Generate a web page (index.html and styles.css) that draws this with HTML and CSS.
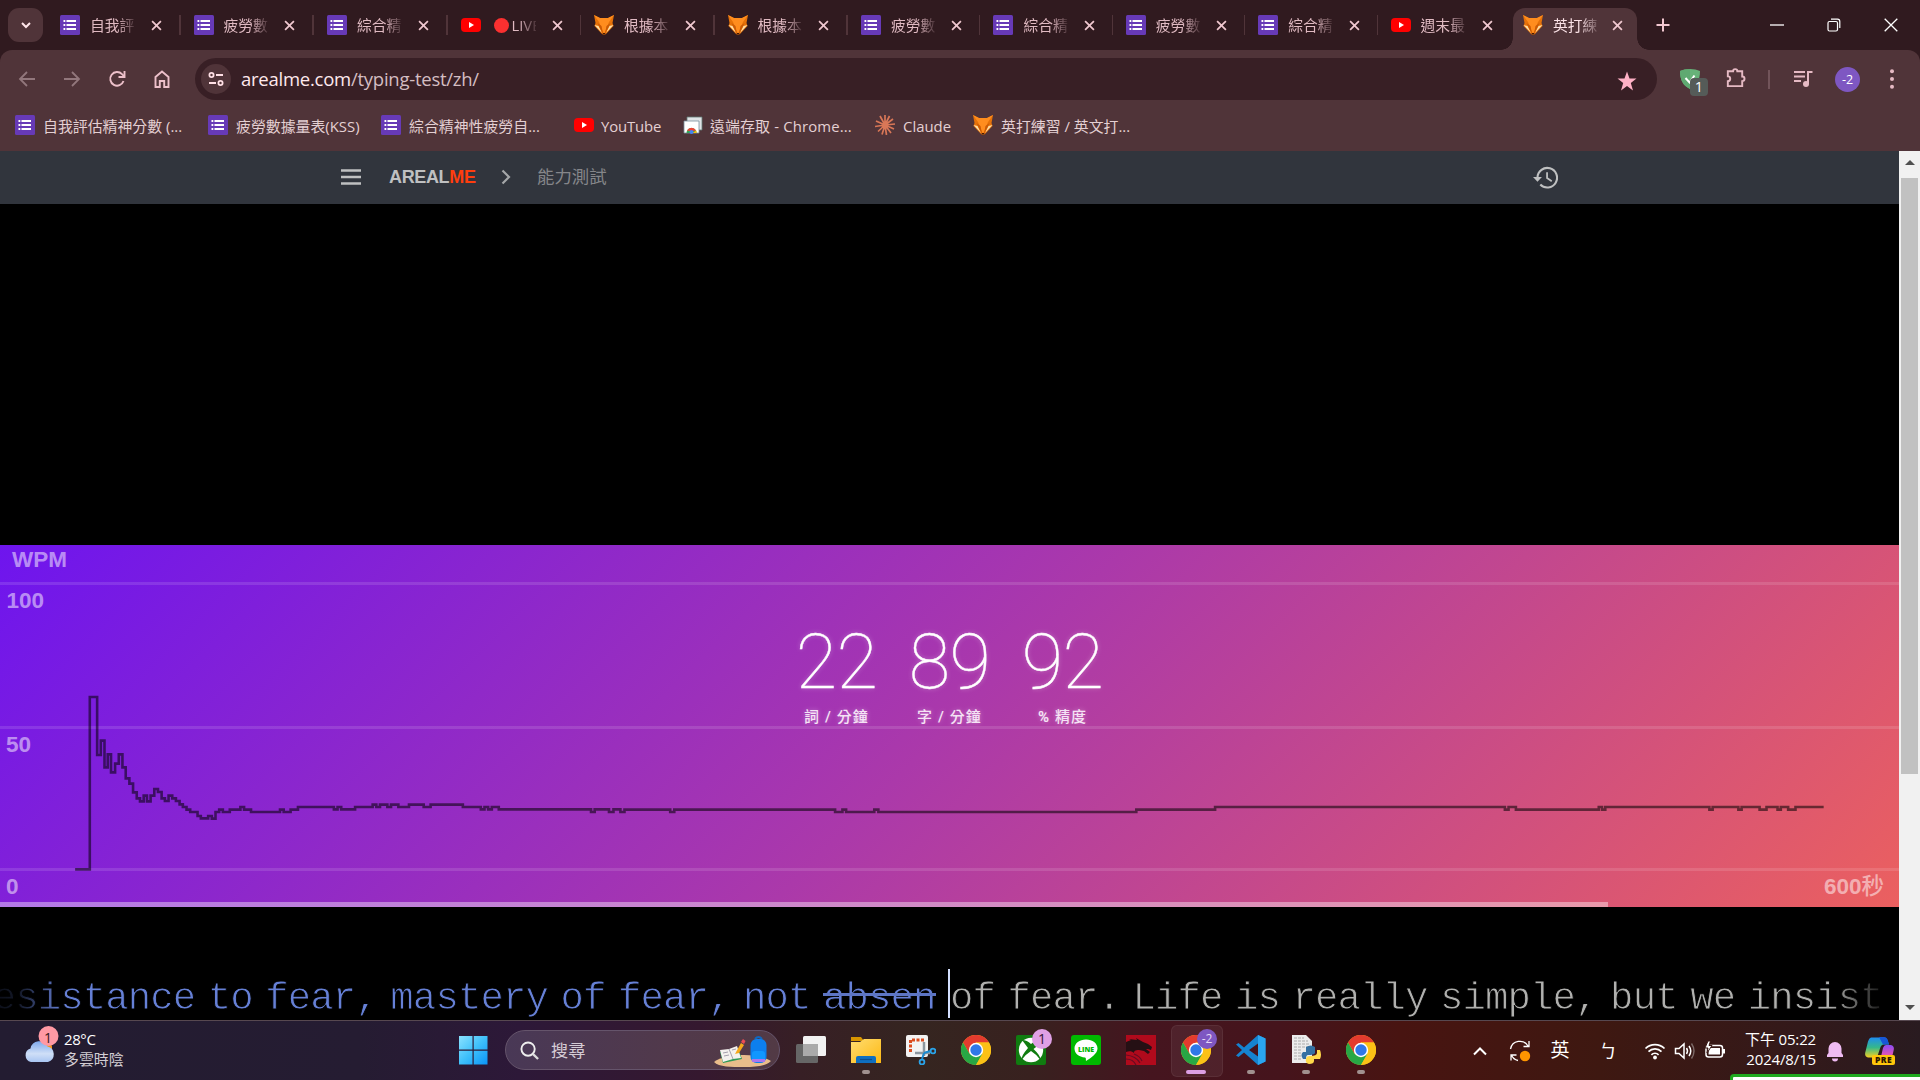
FILE: index.html
```html
<!DOCTYPE html>
<html lang="zh-Hant">
<head>
<meta charset="utf-8">
<title>英打練習</title>
<link rel="stylesheet" href="styles.css">
</head>
<body>
<svg class="sprite" width="0" height="0" aria-hidden="true">
  <defs>
    <linearGradient id="win" x1="0" y1="0" x2="1" y2="1"><stop offset="0" stop-color="#8be2ff"/><stop offset=".5" stop-color="#3fc0fa"/><stop offset="1" stop-color="#0a94f7"/></linearGradient>
    <linearGradient id="cloud" x1="0" y1="0" x2="0" y2="1"><stop offset="0" stop-color="#7fa9ec"/><stop offset=".6" stop-color="#cfdff7"/><stop offset="1" stop-color="#a9c5f2"/></linearGradient>
    <linearGradient id="folder" x1="0" y1="0" x2="1" y2="1"><stop offset="0" stop-color="#ffdc70"/><stop offset="1" stop-color="#fdb913"/></linearGradient>
    <linearGradient id="cop1" x1="0" y1="0" x2="0" y2="1"><stop offset="0" stop-color="#1e8df0"/><stop offset=".5" stop-color="#35b88a"/><stop offset="1" stop-color="#f5d020"/></linearGradient>
    <linearGradient id="cop2" x1="0" y1="0" x2="0" y2="1"><stop offset="0" stop-color="#8a4cf5"/><stop offset=".5" stop-color="#e254b5"/><stop offset="1" stop-color="#ff8a3c"/></linearGradient>
    <symbol id="form" viewBox="0 0 20 20"><rect width="20" height="20" rx="1.5" fill="#673ab7"/><path d="M6.5 6H16M6.5 10H16M6.5 14H16" stroke="#fff" stroke-width="2.2"/><path d="M3.5 6h1.8M3.5 10h1.8M3.5 14h1.8" stroke="#fff" stroke-width="2"/></symbol>
    <symbol id="yt" viewBox="0 0 20 20"><rect y="3" width="20" height="14" rx="4" fill="#f00"/><path d="M8 7v6l5-3z" fill="#fff"/></symbol>
    <symbol id="fox" viewBox="0 0 20 20"><path d="M0 0l6 3h8l6-3-1.500 8 1 3-7.500 8-2 1-2-1-7.500-8 1-3z" fill="#e67209"/><path d="M0 0l6 3h8l6-3-5 7-5 12L5 7z" fill="#ff8d1e"/><path d="M.5 10l4 1 3.500 7zM19.500 10l-4 1-3.500 7z" fill="#ffdfa6"/><path d="M3.500 8l4 3 1.500 8zM16.500 8l-4 3-1.500 8z" fill="#c95a05"/><path d="M8.500 18h3L10 20z" fill="#3a1608"/></symbol>
    <symbol id="x" viewBox="0 0 12 12"><path d="M1.2 1.2l9.6 9.6M10.8 1.2L1.2 10.8" stroke="currentColor" stroke-width="1.9"/></symbol>
    <symbol id="chrome" viewBox="0 0 30 30"><circle cx="15" cy="15" r="15" fill="#fbc116"/><path d="M2 7.5A15 15 0 0 1 28 7.5H15L8.5 18.7z" fill="#e33b2e"/><path d="M2 7.5A15 15 0 0 0 15 30l6.5-11.3-13 0z" fill="#28a745"/><path d="M28 7.5A15 15 0 0 1 15 30l6.5-11.3L15 7.5z" fill="#fbc116"/><circle cx="15" cy="15" r="7.2" fill="#fff"/><circle cx="15" cy="15" r="5.7" fill="#2f78e8"/></symbol>
  </defs>
</svg>

<header class="browser">
  <div class="tabstrip">
    <button class="tabsearch"><svg viewBox="0 0 12 12" width="12" height="12"><path d="M2 4l4 4 4-4" fill="none" stroke="currentColor" stroke-width="2"/></svg></button>
    <div class="tabs">
      <div class="tab"><svg class="fav"><use href="#form"/></svg><span>自我評</span><svg class="close"><use href="#x"/></svg></div>
      <div class="tab"><svg class="fav"><use href="#form"/></svg><span>疲勞數</span><svg class="close"><use href="#x"/></svg></div>
      <div class="tab"><svg class="fav"><use href="#form"/></svg><span>綜合精</span><svg class="close"><use href="#x"/></svg></div>
      <div class="tab"><svg class="fav"><use href="#yt"/></svg><span><i class="live-dot"></i>LIVE</span><svg class="close"><use href="#x"/></svg></div>
      <div class="tab"><svg class="fav"><use href="#fox"/></svg><span>根據本</span><svg class="close"><use href="#x"/></svg></div>
      <div class="tab"><svg class="fav"><use href="#fox"/></svg><span>根據本</span><svg class="close"><use href="#x"/></svg></div>
      <div class="tab"><svg class="fav"><use href="#form"/></svg><span>疲勞數</span><svg class="close"><use href="#x"/></svg></div>
      <div class="tab"><svg class="fav"><use href="#form"/></svg><span>綜合精</span><svg class="close"><use href="#x"/></svg></div>
      <div class="tab"><svg class="fav"><use href="#form"/></svg><span>疲勞數</span><svg class="close"><use href="#x"/></svg></div>
      <div class="tab"><svg class="fav"><use href="#form"/></svg><span>綜合精</span><svg class="close"><use href="#x"/></svg></div>
      <div class="tab before-active"><svg class="fav"><use href="#yt"/></svg><span>週末最</span><svg class="close"><use href="#x"/></svg></div>
      <div class="tab active"><svg class="fav"><use href="#fox"/></svg><span>英打練</span><svg class="close"><use href="#x"/></svg></div>
    </div>
    <svg class="newtab" viewBox="0 0 14 14" width="14" height="14"><path d="M7 .5v13M.5 7h13" stroke="currentColor" stroke-width="2"/></svg>
    <div class="wincontrols">
      <svg viewBox="0 0 14 14"><path d="M0 7h14" stroke="#fff" stroke-width="1.3"/></svg>
      <svg viewBox="0 0 14 14"><rect x="1" y="3.5" width="9.5" height="9.5" rx="1.5" fill="none" stroke="#fff" stroke-width="1.2"/><path d="M4 1.2h6.5a2.3 2.3 0 0 1 2.3 2.3V10" fill="none" stroke="#fff" stroke-width="1.2"/></svg>
      <svg viewBox="0 0 14 14"><path d="M.7.7l12.6 12.6M13.3.7L.7 13.3" stroke="#fff" stroke-width="1.3"/></svg>
    </div>
  </div>

  <div class="toolbar">
    <div class="nav">
      <svg class="dim" viewBox="0 0 20 20"><path d="M18 10H3M10 3l-7 7 7 7" fill="none" stroke="currentColor" stroke-width="1.8"/></svg>
      <svg class="dim" viewBox="0 0 20 20"><path d="M2 10h15M10 3l7 7-7 7" fill="none" stroke="currentColor" stroke-width="1.8"/></svg>
      <svg viewBox="0 0 20 20"><path d="M16.5 12A6.8 6.8 0 1 1 15 5.200l2 2" fill="none" stroke="currentColor" stroke-width="1.9"/><path d="M17.500 2v6h-6" fill="none" stroke="currentColor" stroke-width="1.9"/></svg>
      <svg viewBox="0 0 20 20"><path d="M3.500 18V8L10 2.500 16.500 8v10h-4.300v-6H7.800v6z" fill="none" stroke="currentColor" stroke-width="1.9"/></svg>
    </div>
    <div class="omnibox">
      <span class="siteinfo"><svg viewBox="0 0 16 16" width="16" height="16" fill="none" stroke="currentColor" stroke-width="1.8"><circle cx="3.500" cy="4" r="2.100"/><path d="M8 4h7M1 12h7"/><circle cx="12.500" cy="12" r="2.100"/></svg></span>
      <span class="url"><b>arealme.com</b>/typing-test/zh/</span>
      <svg class="star" viewBox="0 0 20 20"><path d="M10 .5l2.500 7h7l-5.700 4.400L16 19.500l-6-4.600-6 4.600 2.200-7.600L.5 7.500h7z" fill="#ffb1c6"/></svg>
    </div>
    <div class="actions">
      <div class="ext"><svg viewBox="0 0 20 20" width="20" height="20"><path d="M10 0c4 0 7 .7 10 2 0 9-3 14.500-10 18C3 16.500 0 11 0 2 3 .7 6 0 10 0z" fill="#67b279"/><path d="M10 0v20C3 16.500 0 11 0 2 3 .7 6 0 10 0z" fill="#5fa971"/><path d="M5.500 9l4 4.500 5-7" fill="none" stroke="#fff" stroke-width="2"/></svg><span class="badge">1</span></div>
      <svg class="puzzle" viewBox="0 0 24 24"><path d="M4 5.500h5.500a2.200 2.200 0 0 1 4.400 0H19v5.500a2.400 2.400 0 0 1 0 4.800V21H4v-5.200a2.500 2.500 0 0 0 0-5z" fill="none" stroke="currentColor" stroke-width="2"/></svg>
      <i class="divider"></i>
      <svg class="playlist" viewBox="0 0 20 20"><path d="M1 3h11M1 7.500h11M1 12h7" stroke="currentColor" stroke-width="2"/><path d="M15 15V3h4.500" fill="none" stroke="currentColor" stroke-width="2"/><circle cx="13" cy="15" r="3" fill="currentColor"/></svg>
      <span class="avatar">-2</span>
      <svg class="dots" viewBox="0 0 6 20"><g fill="currentColor"><circle cx="3" cy="2.200" r="2"/><circle cx="3" cy="10" r="2"/><circle cx="3" cy="17.800" r="2"/></g></svg>
    </div>
  </div>

  <nav class="bookmarks">
    <a class="bm bm1"><svg class="fav"><use href="#form"/></svg><span>自我評估精神分數 (...</span></a>
    <a class="bm bm2"><svg class="fav"><use href="#form"/></svg><span>疲勞數據量表(KSS)</span></a>
    <a class="bm bm3"><svg class="fav"><use href="#form"/></svg><span>綜合精神性疲勞自...</span></a>
    <a class="bm bm4"><svg class="fav"><use href="#yt"/></svg><span>YouTube</span></a>
    <a class="bm bm5"><svg class="fav" viewBox="0 0 20 20"><path d="M4 2h15v13H4z" fill="#dfe3e6" stroke="#5f7a74" stroke-width=".8"/><path d="M1 6h15v12H1z" fill="#fff" stroke="#78909c" stroke-width=".8"/><path d="M3.500 18a5 5 0 0 1 10 0z" fill="#34a853"/><path d="M4 15.500a5 5 0 0 1 9 0l-4.500 1z" fill="#ea4335"/><path d="M9 18h4.500v-2.500z" fill="#fbbc05"/><circle cx="8.500" cy="17" r="2" fill="#4285f4"/></svg><span>遠端存取 - Chrome...</span></a>
    <a class="bm bm6"><svg class="fav" viewBox="0 0 20 20"><path d="M10 10V0M10 10l4.500-9M10 10l8-6M10 10l10-1M10 10l9 4M10 10l6 8M10 10l1.500 10M10 10L7 19.500M10 10l-7 6.500M10 10L0 11.500M10 10L1 6M10 10L5 1" stroke="#d97757" stroke-width="1.700"/></svg><span>Claude</span></a>
    <a class="bm bm7"><svg class="fav"><use href="#fox"/></svg><span>英打練習 / 英文打...</span></a>
  </nav>
</header>

<div class="viewport">
  <main class="page">
    <div class="sitebar">
      <svg class="menu" viewBox="0 0 20 16"><path d="M0 1.500h20M0 8h20M0 14.500h20" stroke="currentColor" stroke-width="2.400"/></svg>
      <span class="brand">AREAL<em>ME</em></span>
      <svg class="crumb" viewBox="0 0 10 16"><path d="M1.500 1.500L8 8l-6.500 6.500" fill="none" stroke="currentColor" stroke-width="2.200"/></svg>
      <span class="section">能力測試</span>
      <svg class="history" viewBox="0 0 24 22"><path d="M4.300 11A9.400 9.400 0 1 1 7 17.800" fill="none" stroke="currentColor" stroke-width="2"/><path d="M0 10.500h8.600L4.300 15z" fill="currentColor"/><path d="M13.500 6v5.500l4.500 3" fill="none" stroke="currentColor" stroke-width="1.700"/></svg>
    </div>
    <div class="adspace"></div>
    <section class="chart">
      <svg class="plot" viewBox="0 0 1899 362" width="1899" height="362">
        <g stroke="#fff" stroke-opacity=".12" stroke-width="3"><path d="M0 38.500H1899M0 182.500H1899M0 324.500H1899"/></g>
        <g fill="#fff" fill-opacity=".52" class="axis">
          <text x="12" y="22">WPM</text><text x="6.500" y="63">100</text><text x="6" y="206.500">50</text><text x="6" y="349">0</text><text x="1884" y="349" text-anchor="end">600<tspan class="unit">秒</tspan></text>
        </g>
        <g transform="translate(0 -5) scale(.40816 .33333)"><path vector-effect="non-scaling-stroke" fill="none" stroke="#000" stroke-opacity=".54" stroke-width="2.600" d="M184 988H220V471H238V645H247V602H256V682H264V643H272V697H282V671H291V643H300V682H308V715H317V731H326V757H335V775H343V784H352V767H360V784H369V767H378V747H387V756H396V775H404V783H413V767H422V775H431V783H440V793H448V801H457V809H466V816H484V828H492V835H510V828H519V836H528V816H537V809H546V816H563V809H589V801H598V809H615V816H686V809H695V816H712V809H730V801H818V808H827V801H836V808H870V801H913V794H922V801H931V794H949V801H958V794H976V801H1002V794H1038V801H1055V794H1134V801H1178V808H1187V801H1196V808H1205V801H1222V808H1448V816H1457V808H1492V816H1503V808H1520V816H1530V809H1642V816H1652V809H2046V816H2064V809H2073V816H2142V809H2152V816H2784V809H2977V801H3687V809H3696V801H3714V809H3917V801H3925V809H3933V801H4188V809H4196V801H4259V809H4267V801H4311V809H4328V801H4355V809H4363V801H4381V809H4399V801H4468"/></g>
      </svg>
      <div class="stats">
        <div class="stat"><strong>22</strong><small>詞 / 分鐘</small></div>
        <div class="stat"><strong>89</strong><small>字 / 分鐘</small></div>
        <div class="stat"><strong>92</strong><small><b>%</b> 精度</small></div>
      </div>
      <div class="progress" style="width:84.67%"></div>
    </section>
    <section class="typing">
      <div class="typed"><span>esistance to fear, mastery of fear, not <del>absen</del>&nbsp;</span></div>
      <i class="caret"></i>
      <div class="upcoming">of fear. Life is really simple, but we insist</div>
    </section>
  </main>
  <aside class="scrollbar"><i class="up"></i><i class="thumb"></i><i class="down"></i></aside>
</div>

<footer class="taskbar">
  <div class="weather">
    <svg viewBox="0 0 36 38" width="36" height="38"><rect x="20" y="19" width="8" height="8" rx="3" fill="#f7941d"/><path d="M7 37a7 7 0 0 1-.5-13.500 9 9 0 0 1 17-2A8 8 0 0 1 24 37z" fill="url(#cloud)"/><circle cx="24.500" cy="11" r="10" fill="#ff99a4"/></svg><span class="count">1</span>
    <div class="wtext"><span>28°C</span><span>多雲時陰</span></div>
  </div>
  <div class="dock">
    <svg class="app" viewBox="0 0 30 30"><path d="M1 1h13.500v13.500H1zM15.700 1H29.500v13.500H15.700zM1 15.700h13.500V29.500H1zM15.700 15.700H29.500V29.500H15.700z" fill="url(#win)"/></svg>
    <div class="search">
      <svg viewBox="0 0 20 20" width="19" height="19"><circle cx="8.500" cy="8.500" r="7" fill="none" stroke="#eee" stroke-width="2"/><path d="M13.500 13.500l5.500 5.500" stroke="#ddd" stroke-width="2.400"/></svg>
      <span>搜尋</span>
      <svg class="art" viewBox="0 0 58 32" width="58" height="32"><path d="M0 26C12 17 46 17 57 25c-5 5-14 6-27 6S5 31 0 26z" fill="#e9bd8b"/><path d="M6 16l18-4 4 11-19 4z" fill="#2e9b57"/><path d="M6 14l9-1 8-3 4 12-8 1-10 3z" fill="#f4f1ee"/><path d="M15 13l4 10M9 17l5-1M10 20l5-1M18 14l4-1" stroke="#a5a0ad" stroke-width="1"/><path d="M21 18l6-11 3 2-5 8z" fill="#f6a81c"/><path d="M27 6l2-3 2.500 2-1.500 3z" fill="#ee4b55"/><path d="M41 3q3.500-4 7 0" stroke="#1167bd" stroke-width="2" fill="none"/><rect x="36.500" y="3" width="16" height="24" rx="6" fill="#0d7fee"/><rect x="38" y="15" width="13" height="10" rx="3" fill="#1197ff"/><path d="M38 23h13v3H38z" fill="#a976ef"/></svg>
    </div>
    <svg class="app" viewBox="0 0 30 30"><rect x="0" y="9" width="22" height="19" rx="1.500" fill="#666"/><rect x="7" y="1" width="23" height="20" rx="1.500" fill="#f2f2f2"/><path d="M7 9h15v12H8.500A1.500 1.500 0 0 1 7 19.500z" fill="#aaa"/></svg>
    <span class="slot run"><svg class="app" viewBox="0 0 30 30"><path d="M0 2h10l3 4H0z" fill="#d79500"/><path d="M0 7h9l4-3h17v24H0z" fill="url(#folder)"/><path d="M5 28v-5a2 2 0 0 1 2-2h16a2 2 0 0 1 2 2v5z" fill="#0f6fc0"/><path d="M9 24.500h12" stroke="#0a4d8f" stroke-width="1.200"/></svg></span>
    <svg class="app" viewBox="0 0 30 30"><rect width="22" height="22" rx="2" fill="#f3f3f3"/><path d="M4.500 17V5H18" fill="none" stroke="#dc4c1e" stroke-width="3" stroke-dasharray="3 1.500"/><path d="M18 7v14M9 18h15" stroke="#8d979f" stroke-width="2.500"/><path d="M18 18l-2 6M18 18l6-2" stroke="#1b8bd0" stroke-width="2"/><circle cx="16" cy="27" r="2.400" fill="none" stroke="#2aa3e8" stroke-width="1.800"/><circle cx="27" cy="16" r="2.400" fill="none" stroke="#2aa3e8" stroke-width="1.800"/></svg>
    <svg class="app"><use href="#chrome"/></svg>
    <span class="slot"><svg class="app" viewBox="0 0 30 30"><rect width="30" height="30" rx="2" fill="#107c10"/><circle cx="15" cy="15" r="12.200" fill="#fff"/><path d="M6 5q5 0 9 4 4-4 9 0l-6.500 5Q25 21 24.500 25 20 19 15 16 10 19 5.500 25 5 21 12 13z" fill="#107c10"/></svg><b class="pill pink">1</b></span>
    <svg class="app" viewBox="0 0 30 30"><rect width="30" height="30" rx="3" fill="#00b900"/><path d="M15 4.500c6.500 0 11.500 3.800 11.500 9 0 5-6.500 9.500-11.500 12.500-.5-1 .5-3-1-3.500C8 22 3.500 18.500 3.500 13.500c0-5.200 5-9 11.500-9z" fill="#fff"/><text x="15" y="16.500" text-anchor="middle" class="linetext">LINE</text></svg>
    <svg class="app" viewBox="0 0 30 30"><rect width="30" height="30" fill="#b00a1c"/><path d="M0 7l5-2-2-1 8 1-1-2 7 4 5 2 4 3-1 3-3-1h-2l4 3-2 2-4-3-5-1c-4 0-5 1-5 3-2-2-5-2-8-1z" fill="#251014"/><path d="M0 20q10 1 14 8M0 24q7 0 10 6M8 19q6 2 8 7" stroke="#660b22" stroke-width="1.200" fill="none"/></svg>
    <span class="slot current"><svg class="app"><use href="#chrome"/></svg><b class="pill violet">-2</b></span>
    <span class="slot run"><svg class="app" viewBox="0 0 30 30"><path d="M22 0l7.500 3.500v23L22 30 8 17.500 2.500 22 0 20.500 6 15 0 9.500 2.500 8 8 12.500zM22 8.500L13 15l9 6.500z" fill="#1583d0" fill-rule="evenodd"/><path d="M22 0l7.500 3.500v23L22 30z" fill="#2aa5f0"/></svg></span>
    <span class="slot run"><svg class="app" viewBox="0 0 30 30"><path d="M1 0h14l6 6v22H1z" fill="#ececec"/><path d="M3 3h10M3 6h14M3 9h15M3 12h15M3 15h8M3 18h8M3 21h8M3 24h8" stroke="#aaa" stroke-dasharray="3 1"/><path d="M15 17v-5q5-3 9 0v6q-1 2-7 2-2 0-2 4h-3q-3-4 0-7z" fill="#3470a2"/><path d="M26 15h3q2 5 0 9h-6v2q0 3-5 3-4-1-3-5 0-3 4-3 7 0 7-3z" fill="#ffd94a"/></svg></span>
    <span class="slot run"><svg class="app"><use href="#chrome"/></svg></span>
  </div>
  <div class="tray">
    <svg viewBox="0 0 40 24" class="w40"><path d="M14 15.500l6-6 6 6" fill="none" stroke="#fff" stroke-width="2"/></svg>
    <svg viewBox="0 0 40 24" class="w40"><g fill="none" stroke="#fff" stroke-width="1.300"><path d="M10.500 10a9.500 9.500 0 0 1 17.500-3M29 2v5.500h-5.500M18 21.500a9 9 0 0 1-6.500-5.500M11 21.500V16h5.500"/></g><circle cx="25" cy="17" r="5.200" fill="#ff9500"/></svg>
    <span class="ime">英</span><span class="ime zhuyin">ㄅ</span>
    <svg viewBox="0 0 30 24" class="w30"><g fill="none" stroke="#fff" stroke-width="1.700"><path d="M5.500 9.500a13.500 13.500 0 0 1 19 0M8.500 12.700a9 9 0 0 1 13 0M11.400 15.800a5 5 0 0 1 7.200 0"/></g><circle cx="15" cy="18.500" r="1.900" fill="#fff"/></svg>
    <svg viewBox="0 0 30 24" class="w30"><path d="M5.500 9.500h3.500l5-4.500v14l-5-4.500H5.500z" fill="none" stroke="#fff" stroke-width="1.500"/><path d="M16.500 9q2 3 0 6M19 7q3.500 5 0 10" fill="none" stroke="#fff" stroke-width="1.500"/><path d="M21.500 4.500q5 7.500 0 15" fill="none" stroke="#7d6a68" stroke-width="1.400"/></svg>
    <svg viewBox="0 0 30 24" class="w30"><rect x="6" y="6.500" width="16.500" height="11.500" rx="2.500" fill="none" stroke="#fff" stroke-width="1.500"/><path d="M9 9h11v6.500H8.500zM23 10h2v4.500h-2z" fill="#fff"/><path d="M8 2l-3 7h3l-1 5 5-7.500H9L10.500 2z" fill="#fff" stroke="#3a1915" stroke-width="1"/></svg>
    <div class="clock"><span>下午 05:22</span><span>2024/8/15</span></div>
    <svg viewBox="0 0 30 24" class="w30 bell"><path d="M7 18v-2l1.500-2V9.500a6.500 6.500 0 0 1 13 0V14l1.500 2v2z" fill="#efbbf3"/><path d="M12 19.500h6a3 3 0 0 1-6 0z" fill="#efbbf3"/></svg>
    <div class="copilot"><svg viewBox="0 0 30 30" width="30" height="30"><path d="M6 1.500h13q3 0 4 4l1 3h-5q-3 0-4 4l-2 6q-1 3-4 3H3q-4-1-2.500-6l2.500-10q1-3.500 3-4z" fill="url(#cop1)"/><path d="M14 1h5q3 0 4 4l1 3.500h-6z" fill="#1757d6"/><path d="M21 9h5q4 1 2.500 6L26 25q-1 4-5 4H12q2-1 3-4l3-13q1-3 3-3z" fill="url(#cop2)"/></svg><b>PRE</b></div>
  </div>
  <div class="toast"></div>
</footer>
</body>
</html>
```
FILE: styles.css
```css
* { box-sizing: border-box; }
html, body { margin: 0; height: 100%; }
body {
  width: 1920px; height: 1080px; overflow: hidden; display: flex; flex-direction: column;
  background: #000; font-family: "Open Sans", "Noto Sans CJK TC", sans-serif;
}
svg { display: block; flex: none; }
.sprite { position: absolute; }
i, em { font-style: normal; }

/* browser chrome */
.browser { flex: none; height: 151px; background: #301a1f; color: #e8c0c9; }
.tabstrip { height: 50px; display: flex; align-items: center; }
.tabsearch { margin: 0 0 0 8px; width: 35px; height: 34px; border: 0; border-radius: 11px; background: #503439; color: #ffe6ea; display: flex; align-items: center; justify-content: center; }
.tabs { display: flex; margin-left: 4px; height: 50px; align-items: flex-end; }
.tab { position: relative; flex: none; width: 132.400px; height: 42px; padding: 0 0 8px 13px; display: flex; align-items: center; font-size: 14.8px; color: #e0bac2; }
.tab:nth-child(-n+6) { width: 133.500px; }
.tab::after { content: ""; width: 2px; height: 20px; margin-left: 17px; background: #503439; }
.fav { width: 20px; height: 20px; flex: none; }
.tab span { width: 45px; margin-left: 10px; white-space: nowrap; line-height: 22px; -webkit-mask-image: linear-gradient(90deg, #000 60%, rgba(0,0,0,.15)); mask-image: linear-gradient(90deg, #000 60%, rgba(0,0,0,.15)); }
.live-dot { display: inline-block; width: 15px; height: 15px; border-radius: 50%; background: #fb3030; margin: 0 3px 0 3px; vertical-align: -2px; }
.close { width: 11px; height: 11px; margin-left: 16px; color: #f0c8d0; }
.before-active::after, .active::after { display: none; }
.tab.active { width: 123.500px; margin-left: 3.500px; padding-left: 9.500px; background: #503439; border-radius: 12px 12px 0 0; color: #fbe2e7; }
.tab.active .close { margin-left: 14.500px; }
.tab.active::before { content: ""; position: absolute; left: -12px; right: -12px; bottom: 0; height: 12px; background: radial-gradient(circle at 0 0, transparent 11.500px, #503439 12px) left / 12px 12px no-repeat, radial-gradient(circle at 100% 0, transparent 11.500px, #503439 12px) right / 12px 12px no-repeat; }
.newtab { margin-left: 19px; color: #f3c8d1; }
.wincontrols { margin-left: auto; margin-right: 22px; display: flex; gap: 43px; }
.wincontrols svg { width: 14px; height: 14px; }

.toolbar { height: 57px; padding-top: 8px; display: flex; background: #503439; border-radius: 12px 12px 0 0; }
.nav { width: 195px; height: 42px; padding-left: 17px; display: flex; align-items: center; gap: 25px; color: #edc0ca; }
.nav svg { width: 20px; height: 20px; }
.nav .dim { color: #92777c; }
.omnibox { width: 1462px; height: 42px; padding: 0 20px 0 6px; display: flex; align-items: center; border-radius: 21px; background: #381f25; }
.siteinfo { width: 30px; height: 30px; border-radius: 50%; background: #503439; color: #ffdfe5; display: flex; align-items: center; justify-content: center; }
.url { margin-left: 10px; font-size: 18.500px; letter-spacing: -.25px; color: #d4bdc2; line-height: 24px; }
.url b { font-weight: 400; color: #ffe9ed; }
.star { width: 20px; height: 20px; margin-left: auto; margin-top: 4px; }
.actions { display: flex; align-items: center; height: 42px; padding-left: 23px; color: #e6bac4; }
.ext { position: relative; }
.badge { position: absolute; left: 10px; top: 9px; width: 18px; height: 18px; border-radius: 4px; background: #555b58; color: #fff; font-size: 14.500px; line-height: 18px; text-align: center; }
.puzzle { width: 23px; height: 25px; margin-left: 24px; margin-bottom: 4px; }
.divider { width: 2px; height: 19px; margin-left: 21px; background: #72545a; }
.playlist { width: 20px; height: 20px; margin-left: 23px; }
.avatar { width: 25px; height: 25px; margin-left: 22px; border-radius: 50%; background: #7e57c2; color: #fff; font-size: 12.500px; line-height: 25px; text-align: center; }
.dots { width: 6px; height: 20px; margin-left: 29px; }

.bookmarks { height: 44px; padding: 8px 0 0 15px; display: flex; background: #503439; color: #e4d0d3; font-size: 14.900px; }
.bm { display: flex; align-items: center; gap: 8px; height: 20px; white-space: nowrap; }
.bm span { padding-top: 1px; }
.bm1 { width: 193px; } .bm2 { width: 173px; } .bm3 { width: 193px; } .bm4 { width: 109px; gap: 7px; letter-spacing: -.15px; } .bm5 { width: 192px; gap: 7px; letter-spacing: .15px; } .bm6 { width: 98px; }

/* page */
.viewport { flex: none; height: 869px; display: flex; }
.page { width: 1899px; display: flex; flex-direction: column; overflow: hidden; }
.sitebar { height: 53px; padding: 0 341px 1px; display: flex; align-items: center; background: #31353d; color: #bfc0c1; }
.menu { width: 20px; height: 16px; }
.brand { margin-left: 28px; width: 112px; font: 700 18px/20px "Liberation Sans", sans-serif; letter-spacing: -.35px; }
.brand em { color: #ff3d0d; }
.crumb { width: 10px; height: 16px; color: #a5a7a9; }
.section { margin-left: 26px; font-size: 17.400px; color: #85868a; line-height: 24px; padding-bottom: 2px; }
.history { width: 25px; height: 23px; margin-left: auto; }
.adspace { height: 341px; }
.chart { position: relative; height: 362px; background: linear-gradient(135deg, #6e15ee, #ab39aa 50%, #eb605f); }
.plot { position: absolute; inset: 0; }
.axis { font: 700 22.500px "Liberation Sans", "Noto Sans CJK TC", sans-serif; }
.unit { font-weight: 500; }
.stats { position: relative; display: flex; justify-content: center; padding-top: 79px; color: #fff; text-shadow: 0 0 5px rgba(255,255,255,.35); }
.stat { width: 113px; display: flex; flex-direction: column; align-items: center; }
.stat strong { font: 100 75.500px/76px Roboto, sans-serif; letter-spacing: -.5px; -webkit-text-stroke: .4px #fff; }
.stat small { margin-top: 6px; font: 500 15px/22px Roboto, "Noto Sans CJK TC", sans-serif; letter-spacing: 1.100px; color: #f5e3f5; white-space: nowrap; }
.progress { position: absolute; left: 0; bottom: 0; height: 5px; background: rgba(255,255,255,.4); }
.typing { height: 113px; padding-top: 62px; display: flex; font: 39px/50px "Liberation Mono", monospace; letter-spacing: -.9px; word-spacing: -10px; white-space: nowrap; -webkit-text-stroke: .9px #000; -webkit-mask-image: linear-gradient(90deg, rgba(0,0,0,.12), rgba(0,0,0,.2) 20px, #000 62px, #000 1830px, transparent 1890px); mask-image: linear-gradient(90deg, rgba(0,0,0,.12), rgba(0,0,0,.2) 20px, #000 62px, #000 1830px, transparent 1890px); }
.typed, .upcoming { padding-top: 5px; }
.typed { width: 948px; display: flex; justify-content: flex-end; color: #6680d6; }
.typed del { position: relative; text-decoration: none; }
.typed del::after { content: ""; position: absolute; left: 0; right: -1px; top: 16px; height: 3px; background: #5d75c4; }
.caret { width: 2px; height: 49px; background: #d4e0ff; }
.upcoming { width: 949px; color: #b0b0ae; }
.scrollbar { width: 21px; background: #f1f1f1; display: flex; flex-direction: column; align-items: center; }
.up, .down { border: 5px solid transparent; border-top: 0; border-bottom: 5px solid #505050; margin-top: 9px; }
.down { margin: auto 0 10px; border-top: 5px solid #505050; border-bottom: 0; }
.thumb { width: 17px; height: 596px; margin-top: 13px; background: #c1c1c1; }

/* taskbar */
.taskbar { position: relative; flex: none; height: 60px; display: grid; grid-template-columns: 458px 1002px 460px; align-items: center; border-top: 1px solid #574850; color: #fff; background: linear-gradient(90deg, #231c31 0, #251c32 360px, #2d1838 520px, #35182f 700px, #371f25 800px, #352520 920px, #38211f 1030px, #45151f 1150px, #45141c 1280px, #481411 1400px, #3e1811 1600px, #33191a 1800px, #291b20 1920px); }
.weather { position: relative; display: flex; padding-left: 24px; align-items: center; font-size: 15px; height: 59px; }
.weather > svg { margin-top: -13px; }
.count { position: absolute; left: 44px; top: 7px; color: #33181c; font-size: 14px; line-height: 20px; }
.wtext { margin-left: 4px; display: flex; flex-direction: column; line-height: 20px; margin-top: -4px; }
.wtext span:first-child { letter-spacing: -.4px; }
.wtext span + span { font-size: 14.900px; color: #d2cdd3; }
.dock { display: flex; align-items: center; gap: 25px; height: 59px; padding-bottom: 1px; }
.app { width: 30px; height: 30px; }
.search { width: 275px; height: 40px; margin: 0 -9px 0 -8px; padding: 0 7px 0 14px; border: 1px solid #65546b; border-radius: 20px; background: linear-gradient(90deg, #493856, #51394b 60%, #523a45); display: flex; align-items: center; color: #d4cbd4; font-size: 17.200px; }
.search span { margin-left: 12px; padding-bottom: 1px; }
.art { margin: 4px 0 0 auto; }
.slot { position: relative; height: 59px; display: flex; align-items: center; }
.slot svg { position: relative; }
.run::after { content: ""; position: absolute; left: 11px; top: 49px; width: 8px; height: 4px; border-radius: 2px; background: #a1918f; }
.current::before { content: ""; position: absolute; left: -10px; top: 4px; width: 50px; height: 50px; border-radius: 6px; background: rgba(255,255,255,.06); border: 1px solid rgba(255,255,255,.06); }
.current::after { content: ""; position: absolute; left: 5px; top: 49px; width: 20px; height: 4px; border-radius: 2px; background: #dc9fe4; }
.pill { position: absolute; left: 16px; top: 8px; width: 20px; height: 20px; border-radius: 50%; font-weight: 400; font-size: 14px; line-height: 20px; text-align: center; }
.pink { background: #dfa0e6; color: #351738; }
.violet { background: #7e57c2; color: #e5d9f5; font-size: 12px; }
.linetext { font: 900 7px "Open Sans", sans-serif; fill: #00b900; }
.tray { display: flex; align-items: center; height: 59px; }
.w40 { width: 40px; height: 24px; }
.w30 { width: 30px; height: 24px; }
.ime { width: 40px; margin-top: -1px; text-align: center; font-size: 19px; line-height: 24px; }
.zhuyin { margin: 0 12px 0 8px; font-size: 18px; }
.clock { width: 86px; display: flex; flex-direction: column; align-items: flex-end; font-size: 15px; line-height: 20px; white-space: nowrap; letter-spacing: -.15px; margin-top: -3px; }
.bell { margin-left: 4px; }
.copilot { position: relative; margin-left: 15px; }
.copilot b { position: absolute; left: 7px; top: 19px; width: 23px; height: 10px; border-radius: 2px; background: #ffc60b; color: #2b1600; font-size: 8.500px; font-weight: 800; line-height: 10px; text-align: center; letter-spacing: .4px; }
.toast { position: absolute; left: 1730px; right: 0; bottom: 0; height: 6px; border-top: 3px solid #1faa1f; border-left: 3px solid #1faa1f; border-radius: 4px 0 0 0; background: #fff; }
```
